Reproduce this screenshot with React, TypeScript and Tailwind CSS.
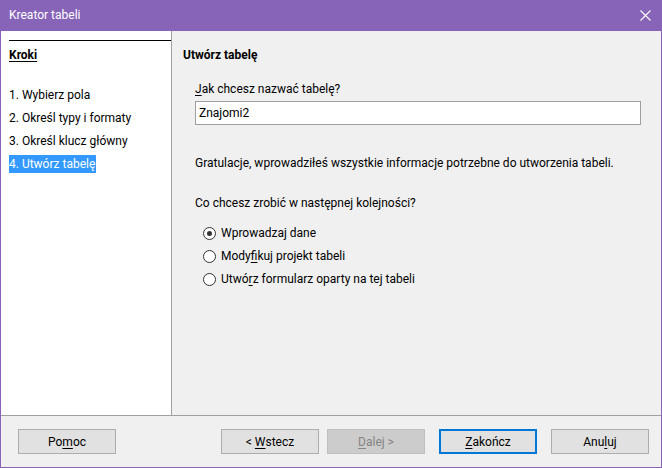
import React, { useState } from 'react';

const font = { fontFamily: 'Roboto, "Noto Sans", sans-serif' };

const U = ({ children }: { children: React.ReactNode }) => <span className="underline underline-offset-2">{children}</span>;

const steps = ['1. Wybierz pola', '2. Określ typy i formaty', '3. Określ klucz główny', '4. Utwórz tabelę'];

const Radio = ({ checked, label, onClick }: { checked: boolean; label: React.ReactNode; onClick: () => void }) => (
  <div className="flex items-center h-[18px] cursor-default" onClick={onClick}>
    <span className="w-[13px] h-[13px] rounded-full border border-[#333333] bg-white flex items-center justify-center mr-[5px]">
      {checked && <span className="w-[5px] h-[5px] rounded-full bg-[#333333]" />}
    </span>
    <span>{label}</span>
  </div>
);

const Button = ({ children, variant = 'normal' }: { children: React.ReactNode; variant?: 'normal' | 'disabled' | 'default' }) => {
  const cls =
    variant === 'disabled'
      ? 'bg-[#cccccc] border border-[#bfbfbf] text-[#838383]'
      : variant === 'default'
      ? 'bg-[#e1e1e1] border-2 border-[#0078d7] text-black'
      : 'bg-[#e1e1e1] border border-[#adadad] text-black';
  return (
    <div className={`w-[98px] h-[25px] flex items-center justify-center ${cls}`}>
      <span className="whitespace-pre">{children}</span>
    </div>
  );
};

export default function App() {
  const [choice, setChoice] = useState(0);
  const [name, setName] = useState('Znajomi2');

  return (
    <div className="w-[662px] h-[468px] flex flex-col border border-[#8764b8] bg-[#f0f0f0] text-[12px] text-black overflow-hidden" style={font}>
      {/* Title bar */}
      <div className="h-[30px] bg-[#8764b8] flex items-center justify-between pl-[8px] pr-[10px] text-white">
        <span className="-mt-[2px]">Kreator tabeli</span>
        <svg width="11" height="11" viewBox="0 0 11 11" className="-mt-[2px]">
          <path d="M0.5 0.5 L10.5 10.5 M10.5 0.5 L0.5 10.5" stroke="white" strokeWidth="1.1" />
        </svg>
      </div>

      {/* Body */}
      <div className="flex flex-1 min-h-0">
        <div className="w-[170px] bg-white border-r border-[#a0a0a0] pt-[9px] pl-[8px] box-content">
          <div className="border-t border-black pt-[6px]">
            <div className="font-bold underline underline-offset-2 h-[17px] leading-[17px]">Kroki</div>
          </div>
          <div className="mt-[22px] flex flex-col gap-[5px]">
            {steps.map((s, i) => (
              <div key={s} className="h-[18px] leading-[18px]">
                <span className={i === 3 ? 'bg-[#3399ff] text-white inline-block h-[18px] pr-[1px]' : ''}>{s}</span>
              </div>
            ))}
          </div>
        </div>

        <div className="flex-1 pl-[11px] pr-[20px] pt-[16px]">
          <div className="font-bold h-[17px] leading-[17px]">Utwórz tabelę</div>
          <div className="pl-[12px] mt-[17px]">
            <div className="h-[17px] leading-[17px]">
              <U>J</U>ak chcesz nazwać tabelę?
            </div>
            <input
              value={name}
              onChange={(e) => setName(e.target.value)}
              className="mt-[3px] w-[446px] h-[24px] border border-[#a0a0a0] bg-white px-[3px] outline-none"
            />
            <div className="mt-[30px] h-[17px] leading-[17px]">
              Gratulacje, wprowadziłeś wszystkie informacje potrzebne do utworzenia tabeli.
            </div>
            <div className="mt-[23px] h-[17px] leading-[17px]">Co chcesz zrobić w następnej kolejności?</div>
            <div className="mt-[12px] pl-[8px] flex flex-col gap-[5px]">
              <Radio checked={choice === 0} onClick={() => setChoice(0)} label="Wprowadzaj dane" />
              <Radio checked={choice === 1} onClick={() => setChoice(1)} label={<>Mody<U>f</U>ikuj projekt tabeli</>} />
              <Radio checked={choice === 2} onClick={() => setChoice(2)} label={<>Utwó<U>r</U>z formularz oparty na tej tabeli</>} />
            </div>
          </div>
        </div>
      </div>

      {/* Footer */}
      <div className="h-[52px] border-t border-[#a0a0a0] flex items-center pl-[17px] pr-[12px]">
        <Button>Po<U>m</U>oc</Button>
        <div className="flex-1" />
        <div className="flex items-center">
          <Button>&lt; <U>W</U>stecz</Button>
          <div className="w-[8px]" />
          <Button variant="disabled"><U>D</U>alej &gt;</Button>
          <div className="w-[14px]" />
          <Button variant="default"><U>Z</U>akończ</Button>
          <div className="w-[14px]" />
          <Button>Anu<U>l</U>uj</Button>
        </div>
      </div>
    </div>
  );
}
